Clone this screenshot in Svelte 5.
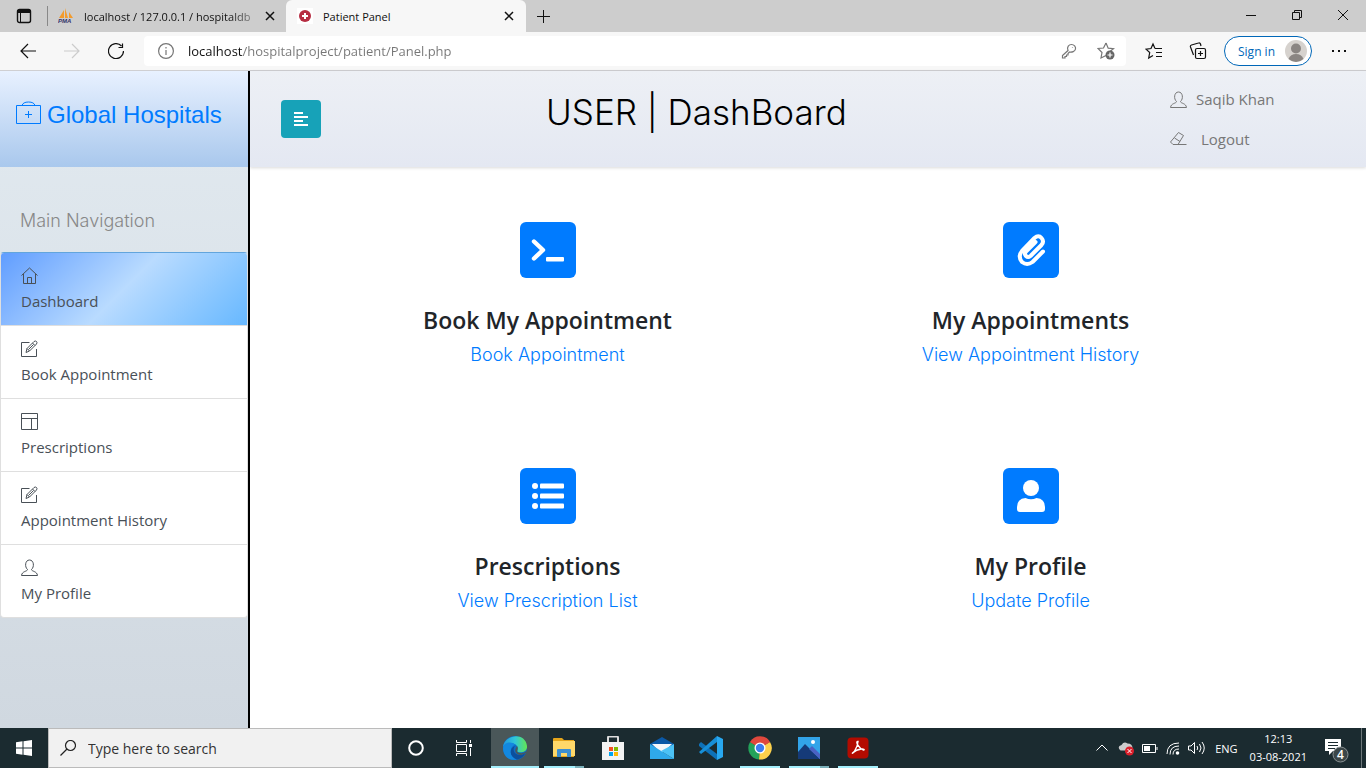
<script lang="ts">
  const navItems = [
    { label: 'Dashboard', icon: 'home' },
    { label: 'Book Appointment', icon: 'pencil' },
    { label: 'Prescriptions', icon: 'layout' },
    { label: 'Appointment History', icon: 'pencil' },
    { label: 'My Profile', icon: 'user' },
  ];

  const cards = [
    { title: 'Book My Appointment', link: 'Book Appointment', icon: 'terminal' },
    { title: 'My Appointments', link: 'View Appointment History', icon: 'clip' },
    { title: 'Prescriptions', link: 'View Prescription List', icon: 'list' },
    { title: 'My Profile', link: 'Update Profile', icon: 'person' },
  ];

  const apps = [
    { name: 'Edge', state: 'current' },
    { name: 'Explorer', state: 'many' },
    { name: 'Store', state: '' },
    { name: 'Mail', state: '' },
    { name: 'Code', state: '' },
    { name: 'Chrome', state: 'open' },
    { name: 'Photos', state: 'many' },
    { name: 'Acrobat', state: 'open' },
  ];

  let active = $state(0);
  let url = $state('localhost/hospitalproject/patient/Panel.php');
  let search = $state('');
</script>

{#snippet lineIcon(name: string)}
  <svg class="line-icon" viewBox="0 0 17 17" width="17" height="17" aria-hidden="true">
    {#if name === 'home'}
      <path d="M.5 8.5 8.5 1l8 7.5M2.5 7v9.500h12V7M6.500 16.500v-6h4v6" />
    {:else if name === 'pencil'}
      <path d="M8.5 2.5h-8v14h15V9M5 12.500l1-4L13 1.500q1.500-1 2.500 0t0 2.500L8.500 11zM6 8.500l2.500 2.500M11.500 3l2.500 2.500M7.500 9.500l5-5" />
    {:else if name === 'layout'}
      <path d="M.5.5h16v16H.5zM.5 5.500h16M10.500 5.500v11" />
    {:else if name === 'user'}
      <path d="M6.500 10.500C3.500 8 4 1 8.500 1s5 7 2 9.500c0 2 5.500 1.500 6 6H.5c.5-4.500 6-4 6-6z" />
    {:else if name === 'eraser'}
      <path d="m8.500 1.500 5 3-5.500 9H3L.5 11zM4.500 7l5.500 3.500M8 13.500h8.500" />
    {/if}
  </svg>
{/snippet}

{#snippet tileIcon(name: string)}
  <svg viewBox="0 0 56 56" width="56" height="56" aria-hidden="true">
    <rect width="56" height="56" rx="6" fill="#007bff" />
    {#if name === 'terminal'}
      <path d="M14 19.500 23 28l-9 8.500" fill="none" stroke="#fff" stroke-width="4.400" stroke-linecap="round" stroke-linejoin="round" />
      <rect x="26" y="35" width="18" height="4.500" rx="1" fill="#fff" />
    {:else if name === 'clip'}
      <path d="M40 29.500 29.500 40q-5.500 4-10.500 0-4.500-5.500 0-11L31.500 16q4-3.500 7 0t0 7L27.500 34q-2.500 2-4.500 0t0-4.500l9.500-9.500" fill="none" stroke="#fff" stroke-width="4" stroke-linecap="round" stroke-linejoin="round" />
    {:else if name === 'list'}
      {#each [18, 28, 38] as y}
        <circle cx="15" cy={y} r="3" fill="#fff" />
        <rect x="20" y={y - 2.5} width="24" height="5" rx="1" fill="#fff" />
      {/each}
    {:else}
      <circle cx="28" cy="20" r="8" fill="#fff" />
      <path d="M22.500 30q5.500 2.500 11 0 8.500.8 8.500 9v2q0 3-3 3H17q-3 0-3-3v-2q0-8.200 8.500-9z" fill="#fff" />
    {/if}
  </svg>
{/snippet}

{#snippet appIcon(name: string)}
  <svg viewBox="0 0 24 24" width="24" height="24" aria-hidden="true">
    {#if name === 'Edge'}
      <defs>
        <linearGradient id="edge-top" x1="0" x2="1">
          <stop offset="0" stop-color="#2196e0" />
          <stop offset=".5" stop-color="#30c6d8" />
          <stop offset="1" stop-color="#63e552" />
        </linearGradient>
      </defs>
      <circle cx="12" cy="12" r="12" fill="#0f6cc4" />
      <path d="M0 11C1-1 22-5 24 10c.5 5-4 7-9 6-2-1 1-3-1-6-4-5-12-3-14 1z" fill="url(#edge-top)" />
      <path d="M0 12c1-6 9-7 12-3-5 1-7 11 2 14.500C5 25.500 0 19 0 12z" fill="#1388e0" />
      <path d="M12 10c-3 3-1 9 5 9 2 0 4-1 5.500-2-2 4-5 6-8.500 6.500C6 21 6 12 12 10z" fill="#0c4f9c" />
      <path d="M14 10c2 3-1 5 1 6.500 3 1.500 7 1 9-2.500l-1 3-5 2c-5 0-7-4-5-7z" fill="#4a5759" />
    {:else if name === 'Explorer'}
      <path d="M1 3q0-1 1-1h8l2 2h10v17H1z" fill="#e5a51b" />
      <path d="M1 5h22v15H1z" fill="#ffd869" />
      <path d="M5 21v-7q0-1 1-1h12q1 0 1 1v7h-4v-4H9v4z" fill="#3d8fd0" />
    {:else if name === 'Store'}
      <path d="M7 7V1.500q0-1 1-1h8q1 0 1 1V7" fill="none" stroke="#ddd" stroke-width="2" />
      <path d="M1 6h22v18H1z" fill="#f3f3f3" />
      <path d="M8 11h4v4H8z" fill="#f25022" />
      <path d="M13 11h4v4h-4z" fill="#7fba00" />
      <path d="M8 16h4v4H8z" fill="#00a4ef" />
      <path d="M13 16h4v4h-4z" fill="#ffb900" />
    {:else if name === 'Mail'}
      <path d="M0 8 12 1l12 7v5H0z" fill="#0b58a6" />
      <path d="M2 8h20l-8 8h-4z" fill="#f5f7fa" />
      <path d="M0 8 24 23H0z" fill="#2fa9ea" />
      <path d="M24 8v15L11 15z" fill="#4cc2f5" />
    {:else if name === 'Code'}
      <path d="m0 8 2-2 16 12v6L0 10z" fill="#0e71b8" />
      <path d="m0 16 18-16v6L2 18z" fill="#178fd8" />
      <path d="m18 0 6 3v18l-6 3z" fill="#28a8f0" />
    {:else if name === 'Chrome'}
      <path d="M12 12 2 6a11.500 11.500 0 0 1 20 0z" fill="#e0483d" />
      <path d="M12 12 2 6a11.500 11.500 0 0 0 9 17.500z" fill="#23a25a" />
      <path d="M12 12 22 6a11.500 11.500 0 0 1-11 17.500z" fill="#fdd14c" />
      <path d="M2 6h20L12 12z" fill="#e0483d" />
      <circle cx="12" cy="12" r="5.500" fill="#fff" />
      <circle cx="12" cy="12" r="4.200" fill="#3d7df0" />
    {:else if name === 'Photos'}
      <path d="M1 1h22v22H1z" fill="#32a4e9" />
      <path d="M1 16 8 8l15 15H1z" fill="#153a78" />
      <path d="m12 13 3-3 8 8v5z" fill="#4b62c4" />
      <circle cx="16" cy="6" r="2" fill="#fff" />
    {:else}
      <rect x="1.500" y="1.500" width="21" height="21" rx="4" fill="#b30b00" />
      <path d="M11.500 5.500c-2 0 1 7 6 8.500 3-1-5-2.500-11 3-1 2 5-4 5.500-11.500z" fill="none" stroke="#fff" stroke-width="1.400" />
    {/if}
  </svg>
{/snippet}

<div class="screen">
  <header class="tabs">
    <button class="tab-menu" aria-label="Tab actions menu">
      <svg viewBox="0 0 16 16" width="16" height="16">
        <rect x="1.500" y="1.500" width="13" height="13" rx="2" fill="none" stroke="#111" stroke-width="1.400" />
        <path d="M1.500 2h13v3h-13z" fill="#111" />
        <path d="M4.500 4v10" stroke="#111" />
      </svg>
    </button>
    <div class="tab">
      <svg viewBox="0 0 16 16" width="16" height="16" aria-hidden="true">
        <path d="M1 10 6 2v8zM7 10V0l3 10zM11 10V4l4 6z" fill="#f39b2d" />
        <text x="0" y="15" class="pma">PMA</text>
      </svg>
      <button class="tab-title fading">localhost / 127.0.0.1 / hospitaldb</button>
      <button class="close" aria-label="Close tab">
        <svg viewBox="0 0 10 10" width="10" height="10"><path d="m1 1 8 8M9 1 1 9" /></svg>
      </button>
    </div>
    <div class="tab selected">
      <svg viewBox="0 0 16 16" width="16" height="16" aria-hidden="true">
        <path d="M0 0h16v16H0z" fill="#fff" />
        <circle cx="8" cy="8" r="6" fill="#b62d42" />
        <path d="M8 5v6M5 8h6" stroke="#fff" class="cross" />
      </svg>
      <button class="tab-title">Patient Panel</button>
      <button class="close" aria-label="Close tab">
        <svg viewBox="0 0 10 10" width="10" height="10"><path d="m1 1 8 8M9 1 1 9" /></svg>
      </button>
    </div>
    <button class="new-tab" aria-label="New tab">
      <svg viewBox="0 0 15 15" width="15" height="15"><path d="M7.500 1v13M1 7.500h13" /></svg>
    </button>
    <div class="window-buttons">
      <button aria-label="Minimize">
        <svg viewBox="0 0 10 10" width="10" height="10"><path d="M0 5.500h10" /></svg>
      </button>
      <button aria-label="Restore">
        <svg viewBox="0 0 10 10" width="10" height="10"><path d="M.5 2.500h7v7h-7zM2.500 2.500v-2h7v7h-2" /></svg>
      </button>
      <button aria-label="Close">
        <svg viewBox="0 0 10 10" width="10" height="10"><path d="m0 0 10 10M10 0 0 10" /></svg>
      </button>
    </div>
  </header>

  <div class="toolbar">
    <button class="tool" aria-label="Back">
      <svg viewBox="0 0 16 16" width="16" height="16"><path d="M16 8H1M8 1 1 8l7 7" /></svg>
    </button>
    <button class="tool disabled" aria-label="Forward" disabled>
      <svg viewBox="0 0 16 16" width="16" height="16"><path d="M0 8h15M8 1l7 7-7 7" /></svg>
    </button>
    <button class="tool" aria-label="Refresh">
      <svg viewBox="0 0 16 16" width="16" height="16"><path d="M15.500 8A7.500 7.500 0 1 1 13.500 3M14.500.5v4h-4" /></svg>
    </button>
    <div class="address">
      <svg viewBox="0 0 16 16" width="16" height="16" class="muted" aria-hidden="true">
        <circle cx="8" cy="8" r="7.400" /><path d="M8 7v5M8 4v1.500" />
      </svg>
      <input aria-label="Address" bind:value={url} />
      <svg viewBox="0 0 16 16" width="16" height="16" class="muted" aria-hidden="true">
        <path d="M7 7.500C5.500 4 8 1.500 10.500 1.500S15 3.500 14.500 6 11 9.500 8.500 9L7 10.500v1.500H5.500v1.500H4V15H1.500v-2.500zM11.500 4.500v.5" />
      </svg>
      <svg viewBox="0 0 18 18" width="18" height="18" class="muted star-add" aria-hidden="true">
        <path d="m9 1 2.200 5.200 5.300.5L13 9.500M9 13.500 4 16l1-5.500-4-4 5.500-.5L9 1" />
        <circle cx="13" cy="13" r="4.500" fill="#666" stroke="none" />
        <path d="M13 10.500v5M10.500 13h5" stroke="#fff" />
      </svg>
    </div>
    <button class="tool" aria-label="Favorites">
      <svg viewBox="0 0 18 18" width="18" height="18"><path d="M10 6.500 8 2 6 6.500l-5 .7 3.700 3.300-1 5.500L8 13.500M10 6.500h7M11 10.500h6M11 14.500h6" /></svg>
    </button>
    <button class="tool" aria-label="Collections">
      <svg viewBox="0 0 18 18" width="18" height="18"><path d="M8 6.500h7q1.500 0 1.500 1.500v7q0 1.500-1.500 1.500H8q-1.500 0-1.500-1.500V8q0-1.500 1.500-1.500zM11.500 9v5M9 11.500h5M4.500 13 1.500 5q-.5-1.500 1-2l7-2q1.500-.5 2 1l.5 2" /></svg>
    </button>
    <button class="sign-in">
      Sign in
      <svg viewBox="0 0 22 22" width="22" height="22" aria-hidden="true">
        <circle cx="11" cy="11" r="11" fill="#d6d2ce" />
        <circle cx="11" cy="8.500" r="5" fill="#8a8582" />
        <path d="M3.500 19q2-5 7.500-5t7.500 5q-7.500 6-15 0z" fill="#8a8582" />
      </svg>
    </button>
    <button class="tool more" aria-label="Settings and more">
      <svg viewBox="0 0 14 14" width="14" height="14"><path d="M0 7h2M6 7h2M12 7h2" stroke-width="2" /></svg>
    </button>
  </div>

  <div class="page">
    <aside>
      <a class="brand" href="#home">
        <svg viewBox="0 0 25 23" width="25" height="23" aria-hidden="true">
          <path d="M.5 4.500h24v18H.5zM6 4.500q1-3.500 6.500-3.500t6.500 3.500M12.500 10v7M9 13.500h7" />
        </svg>
        Global Hospitals
      </a>
      <p class="nav-heading">Main Navigation</p>
      <nav>
        {#each navItems as item, i}
          <a href="#nav-{i}" class:active={active === i} onclick={() => (active = i)}>
            {@render lineIcon(item.icon)}
            <span>{item.label}</span>
          </a>
        {/each}
      </nav>
    </aside>

    <main>
      <div class="top">
        <button class="toggle" aria-label="Toggle sidebar">
          <svg viewBox="0 0 14 15" width="14" height="15"><path d="M0 1h9M0 5h14M0 9h9M0 13h14" /></svg>
        </button>
        <h1>USER | DashBoard</h1>
        <div class="account">
          <a href="#profile">{@render lineIcon('user')} Saqib Khan</a>
          <a href="#logout" class="logout">{@render lineIcon('eraser')} Logout</a>
        </div>
      </div>
      <div class="cards">
        {#each cards as card}
          <section>
            {@render tileIcon(card.icon)}
            <h2>{card.title}</h2>
            <a href="#open">{card.link}</a>
          </section>
        {/each}
      </div>
    </main>
  </div>

  <footer>
    <button class="task" aria-label="Start">
      <svg viewBox="0 0 16 16" width="16" height="16"><path d="M0 2.200 6.500 1.300v6.200H0zM7.500 1.200 16 0v7.500H7.500zM0 8.500h6.500v6.200L0 13.800zM7.500 8.500H16V16l-8.500-1.200z" fill="#fff" /></svg>
    </button>
    <label class="search">
      <svg viewBox="0 0 16 16" width="16" height="16" aria-hidden="true"><circle cx="10.500" cy="5.500" r="5" /><path d="M7 9 .5 15.500" /></svg>
      <input aria-label="Search" placeholder="Type here to search" bind:value={search} />
    </label>
    <button class="task" aria-label="Cortana">
      <svg viewBox="0 0 16 16" width="16" height="16"><circle cx="8" cy="8" r="6.800" fill="none" stroke="#fff" stroke-width="2" /></svg>
    </button>
    <button class="task" aria-label="Task view">
      <svg viewBox="0 0 16 16" width="16" height="16"><path d="M.5 0v2.500h10V0M.5 16v-2.500h10V16M.5 4.500h10v7H.5zM14.500 0v3M14.500 8v8" fill="none" stroke="#fff" /><path d="M13 4h3v3h-3z" fill="#fff" /></svg>
    </button>
    <div class="apps">
      {#each apps as app}
        <button class="app {app.state}" aria-label={app.name}>{@render appIcon(app.name)}</button>
      {/each}
    </div>
    <div class="tray">
      <svg viewBox="0 0 16 16" width="16" height="16" aria-hidden="true"><path d="m2.500 10.500 5.500-5.500 5.500 5.500" /></svg>
      <svg viewBox="0 0 16 16" width="16" height="16" aria-hidden="true">
        <path d="M2.500 10.500q-4-4 1-5.500 2.500-4 6-1.500 5 0 5 5v2z" fill="#ccc" stroke="none" />
        <circle cx="11.500" cy="11" r="4.500" fill="#dc1f2b" stroke="none" />
        <path d="m9.500 9 4 4M13.500 9l-4 4" />
      </svg>
      <svg viewBox="0 0 16 16" width="16" height="16" aria-hidden="true"><path d="M.5 4.500h13v8H.5zM15 7v3" /><path d="M2 6h6v5H2z" fill="#fff" stroke="none" /></svg>
      <svg viewBox="0 0 14 16" width="14" height="16" aria-hidden="true">
        <path d="M1 14Q1 3 13 3M4 14.500Q4 6 13 6M7 14.500Q7 9 13 9" />
        <circle cx="11.500" cy="13" r="1.800" fill="#fff" stroke="none" />
      </svg>
      <svg viewBox="0 0 17 16" width="17" height="16" aria-hidden="true"><path d="M.5 6H3l3.500-3.500v11L3 10H.5zM9 6q1.500 2 0 4M11.500 4q3 4 0 8M14 2q4.500 6 0 12" /></svg>
      <span class="lang">ENG</span>
      <div class="clock"><span>12:13</span><span>03-08-2021</span></div>
      <button class="notes" aria-label="4 notifications">
        <svg viewBox="0 0 24 24" width="24" height="24">
          <path d="M0 0h16v12H8l-4 4v-4H0z" fill="#fff" />
          <path d="M3 3.500h10M3 6.500h10M3 9.500h7" stroke="#1b2b30" />
          <circle cx="15.500" cy="15.500" r="7.500" fill="#3b4648" stroke="#899193" />
          <text x="12" y="20">4</text>
        </svg>
      </button>
    </div>
  </footer>
</div>

<style>
  :global(body) {
    font-family: 'Open Sans', 'Noto Sans', sans-serif;
  }

  * {
    box-sizing: border-box;
  }

  button {
    padding: 0;
    border: none;
    background: none;
    font: inherit;
    color: inherit;
    display: flex;
    align-items: center;
    justify-content: center;
  }

  a {
    text-decoration: none;
  }

  input {
    border: none;
    outline: none;
    background: none;
    font: inherit;
    min-width: 0;
    flex: 1;
    padding: 0;
  }

  .screen {
    min-height: 100vh;
    display: flex;
    flex-direction: column;
  }

  /* browser */
  .tabs {
    height: 32px;
    display: flex;
    background: #cdcdcd;
    font-size: 11px;
    color: #111;
  }

  .tab-menu {
    width: 48px;
    position: relative;
  }

  .tab-menu::after {
    content: '';
    position: absolute;
    right: 0;
    top: 6px;
    width: 1px;
    height: 20px;
    background: #888;
  }

  .tab {
    width: 240px;
    display: flex;
    align-items: center;
    gap: 10px;
    padding: 0 12px 0 11px;
  }

  .tab:not(.selected) {
    width: 238px;
    padding: 0 11px 0 10px;
  }

  .tab.selected {
    background: #f7f7f7;
    border-radius: 6px 6px 0 0;
  }

  .tab svg {
    flex: none;
  }

  .tab-title {
    flex: 1;
    justify-content: flex-start;
    white-space: nowrap;
  }

  .fading {
    mask-image: linear-gradient(to right, #000 85%, rgba(0, 0, 0, 0.3));
  }

  .cross {
    stroke-width: 2;
  }

  .close path {
    stroke: #111;
    stroke-width: 1.5;
  }

  .pma {
    font: italic bold 6px 'Liberation Sans', sans-serif;
    fill: #34346b;
  }

  .new-tab {
    width: 34px;
  }

  .new-tab path,
  .window-buttons path {
    stroke: #111;
    fill: none;
  }

  .window-buttons {
    display: flex;
    margin-left: auto;
  }

  .window-buttons button {
    width: 46px;
    height: 29px;
  }

  .toolbar {
    height: 39px;
    display: flex;
    align-items: center;
    background: #f7f7f7;
    border-bottom: 1px solid #cfcfd2;
    padding-left: 6px;
    font-size: 13px;
  }

  .tool {
    width: 44px;
  }

  .tool svg,
  .address svg {
    fill: none;
    stroke: #111;
    stroke-width: 1.2;
  }

  .tool.disabled svg {
    stroke: #ccc;
  }

  .address {
    flex: 1;
    height: 30px;
    display: flex;
    align-items: center;
    gap: 14px;
    background: #fff;
    border-radius: 4px;
    padding: 0 11px 0 14px;
    margin: 0 6px;
  }

  .address .muted {
    stroke: #767676;
  }

  .address .star-add {
    margin-left: 6px;
  }

  .address input {
    color: transparent;
    background: linear-gradient(to right, #111 55px, #767676 55px);
    background-clip: text;
    -webkit-background-clip: text;
  }

  .sign-in {
    width: 88px;
    height: 30px;
    margin-left: 4px;
    padding-right: 4px;
    gap: 10px;
    justify-content: flex-end;
    border: 1px solid #0067b8;
    border-radius: 15px;
    color: #0067b8;
    font-size: 12px;
    background: #fff;
  }

  .tool.more {
    width: 54px;
  }

  /* page */
  .page {
    flex: 1;
    display: flex;
  }

  aside {
    width: 250px;
    border-right: 2px solid #000;
    background: linear-gradient(#e2eaf0, #d0d8e0);
  }

  .brand {
    height: 96px;
    display: flex;
    align-items: center;
    gap: 6px;
    padding: 0 16px 8px;
    background: linear-gradient(#e8f1ff, #a9c8ed);
    color: #007bff;
    font: 24px 'Liberation Sans', Arial, sans-serif;
    white-space: nowrap;
  }

  .brand svg {
    fill: none;
    stroke: #007bff;
    margin-bottom: 6px;
  }

  .nav-heading {
    margin: 40px 0 18px 20px;
    font: 300 18px/27px Inter, sans-serif;
    color: #888;
  }

  nav {
    display: flex;
    flex-direction: column;
    border: 1px solid #dfdfdf;
    border-top-color: #62a5dd;
    border-radius: 4px;
    overflow: hidden;
    background: #fff;
  }

  nav a {
    height: 73px;
    padding: 14px 20px 0;
    border-bottom: 1px solid #dfdfdf;
    color: #495057;
    font-size: 15px;
    line-height: 24px;
  }

  nav a:last-child {
    height: 72px;
    border-bottom: none;
  }

  nav a.active {
    background: linear-gradient(135deg, #609dff 0%, #b9dbff 50%, #67b8ff 100%);
  }

  nav .line-icon {
    display: block;
    margin-bottom: 5px;
  }

  .line-icon {
    fill: none;
    stroke: currentColor;
    flex: none;
  }

  main {
    flex: 1;
    min-width: 0;
    background: #fff;
  }

  .top {
    height: 96px;
    display: grid;
    grid-template-columns: 22% 36% 1fr 196px;
    align-items: center;
    background: linear-gradient(#edf0f5, #e4e8f2);
    box-shadow: 0 1px 3px rgba(0, 0, 0, 0.15);
  }

  .toggle {
    width: 40px;
    height: 38px;
    margin-left: 31px;
    border-radius: 4px;
    background: #17a2b8;
  }

  .toggle path {
    stroke: #fff;
    stroke-width: 2;
  }

  h1 {
    margin: 0 0 14px;
    font: 300 35px/44px Inter, sans-serif;
    text-align: center;
    white-space: nowrap;
    color: #000;
  }

  .account {
    grid-column: 4;
    display: flex;
    flex-direction: column;
    font-size: 15px;
  }

  .account a {
    display: flex;
    align-items: center;
    gap: 9px;
    height: 40px;
    color: #777;
  }

  .account .logout {
    gap: 14px;
  }

  .cards {
    display: grid;
    grid-template-columns: 1fr 1fr;
    padding: 55px 94px 0 56px;
  }

  section {
    height: 246px;
    display: flex;
    flex-direction: column;
    align-items: center;
  }

  h2 {
    margin: 27px 0 5px;
    font-size: 23px;
    font-weight: 600;
    line-height: 30px;
    color: #212529;
  }

  section a {
    font: 300 18px/30px Inter, sans-serif;
    color: #007bff;
  }

  /* taskbar */
  footer {
    height: 40px;
    display: flex;
    background: #1b2b30;
    color: #fff;
  }

  .task {
    width: 48px;
  }

  .search {
    width: 344px;
    display: flex;
    align-items: center;
    gap: 12px;
    padding: 0 11px;
    background: #f1f1f1;
    border: 1px solid #bbb;
    font-size: 14px;
  }

  .search svg {
    fill: none;
    stroke: #222;
    stroke-width: 1.2;
  }

  .search input::placeholder {
    color: #333;
    opacity: 1;
  }

  .apps {
    display: flex;
    gap: 1px;
    margin-left: 3px;
  }

  .app {
    width: 48px;
    position: relative;
  }

  .app.current {
    background: #4a5759;
  }

  .app::after {
    content: '';
    position: absolute;
    left: 4px;
    right: 4px;
    bottom: 0;
    height: 2px;
  }

  .app.current::after {
    left: 0;
    right: 0;
    background: #a4effc;
  }

  .app.open::after {
    background: #a4effc;
  }

  .app.many::after {
    background: linear-gradient(to right, #a4effc 31px, #7ab0ba 31px);
  }

  .tray {
    display: flex;
    align-items: center;
    gap: 8px;
    margin-left: auto;
    margin-right: 4px;
    border-right: 1px solid #6d777a;
    font-size: 11px;
  }

  .tray > svg {
    fill: none;
    stroke: #fff;
  }

  .lang {
    margin-left: 2px;
  }

  .clock {
    display: flex;
    flex-direction: column;
    align-items: center;
    line-height: 18px;
    margin: 0 10px 0 4px;
  }

  .notes {
    margin: 6px 12px 0 0;
  }

  .notes text {
    font-size: 12px;
    font-weight: 600;
    fill: #fff;
  }
</style>
